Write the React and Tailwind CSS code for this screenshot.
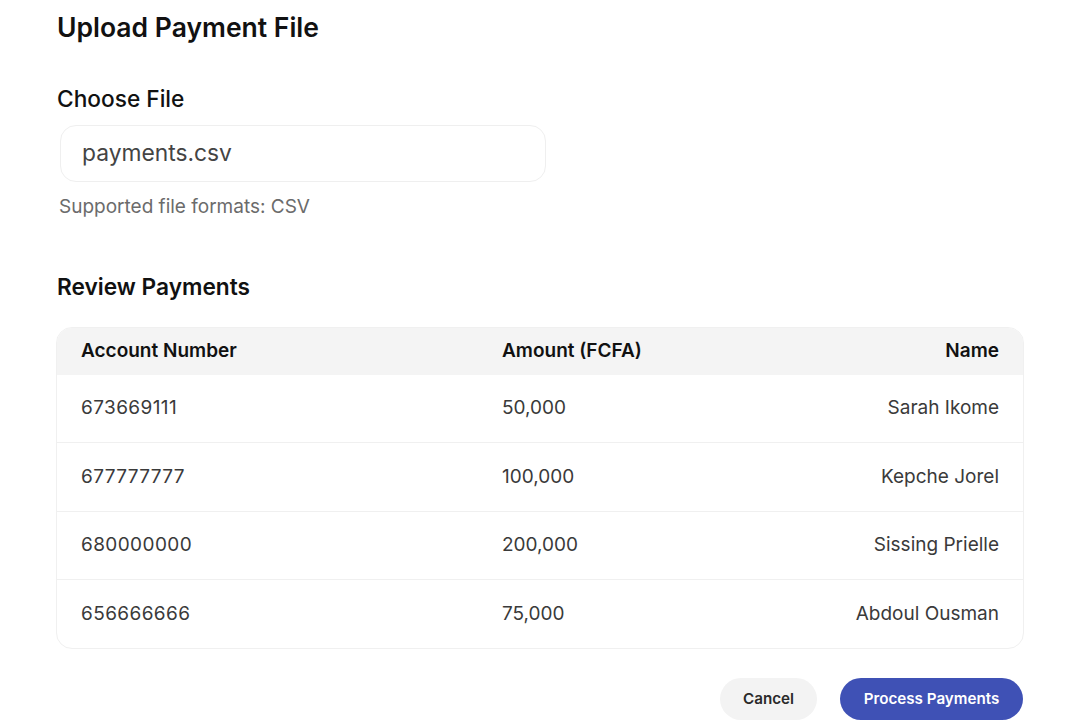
import React from "react";

const rows = [
  ["673669111", "50,000", "Sarah Ikome"],
  ["677777777", "100,000", "Kepche Jorel"],
  ["680000000", "200,000", "Sissing Prielle"],
  ["656666666", "75,000", "Abdoul Ousman"],
];

export default function App() {
  return (
    <div className="min-h-[724px] w-[1080px] bg-white text-[#111]" style={{ fontFamily: "Inter, 'Noto Sans', sans-serif" }}>
      <div className="pl-[56px] pr-[56px] pt-[11px]">
        <h1 className="ml-[1px] text-[26.5px] leading-[32px] font-semibold">Upload Payment File</h1>
        <h2 className="mt-[42px] ml-[1px] text-[22.7px] leading-[28px] font-medium">Choose File</h2>
        <div className="mt-[12px] ml-[4px] w-[486px] h-[57px] rounded-[16px] border border-[#efefef] flex items-center pl-[21px] text-[22.8px] text-[#444]">
          payments.csv
        </div>
        <p className="mt-[13px] ml-[3px] text-[19px] leading-[24px] text-[#6b6b6b]">Supported file formats: CSV</p>
        <h2 className="mt-[54px] ml-[1px] text-[22.7px] leading-[28px] font-semibold">Review Payments</h2>
        <div className="mt-[26px] w-[968px] rounded-[16px] border border-[#f0f0f0] overflow-hidden">
          <div className="grid grid-cols-[421px_1fr_1fr] h-[47px] items-center bg-[#f4f4f4] text-[19px] font-semibold">
            <div className="px-6">Account Number</div>
            <div className="px-6">Amount (FCFA)</div>
            <div className="px-6 text-right">Name</div>
          </div>
          {rows.map((r, i) => (
            <div
              key={i}
              className={`grid grid-cols-[421px_1fr_1fr] h-[68.3px] items-center text-[19px] text-[#3a3a3a] ${i < rows.length - 1 ? "border-b border-[#f0f0f0]" : ""}`}
            >
              <div className="px-6 tracking-[0.4px]">{r[0]}</div>
              <div className="px-6">{r[1]}</div>
              <div className="px-6 text-right">{r[2]}</div>
            </div>
          ))}
        </div>
        <div className="mt-[29px] w-[968px] flex justify-end gap-[23px]">
          <button className="w-[97px] h-[42px] rounded-full bg-[#f3f3f3] text-[15.2px] font-semibold text-[#2a2a2a]">Cancel</button>
          <button className="w-[183px] h-[42px] rounded-full bg-[#3f51b5] text-[15.2px] font-semibold text-white mr-[1px]">Process Payments</button>
        </div>
      </div>
    </div>
  );
}
